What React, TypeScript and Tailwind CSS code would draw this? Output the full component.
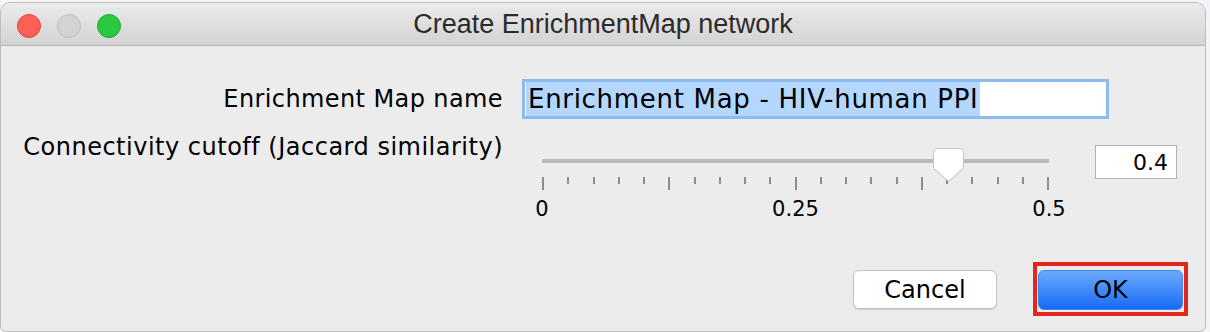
import React from 'react';

const BODY_FONT = { fontFamily: '"DejaVu Sans", "Noto Sans", sans-serif' };
const TITLE_FONT = { fontFamily: '"Liberation Sans", Arial, sans-serif' };

function TrafficLights() {
  return (
    <div className="absolute left-[16px] top-[11px] flex gap-[16px]">
      <span className="block w-[24px] h-[24px] rounded-full bg-[#fe5f57] border border-[#e0443e]" />
      <span className="block w-[24px] h-[24px] rounded-full bg-[#d3d3d3] border border-[#bcbcbc]" />
      <span className="block w-[24px] h-[24px] rounded-full bg-[#2ac840] border border-[#1aab29]" />
    </div>
  );
}

function Thumb() {
  return (
    <svg width="33" height="37" viewBox="0 0 33 37" className="absolute left-[410px] top-[18px]">
      <path
        d="M 5 2.5 H 28 Q 31.5 2.5 31.5 6 V 22 L 16.5 35.5 L 1.5 22 V 6 Q 1.5 2.5 5 2.5 Z"
        fill="#000000"
        opacity="0.08"
      />
      <path
        d="M 5 1.5 H 28 Q 31.5 1.5 31.5 5 V 21 L 16.5 34.5 L 1.5 21 V 5 Q 1.5 1.5 5 1.5 Z"
        fill="#ffffff"
        stroke="#c6c6c6"
        strokeWidth="1"
      />
    </svg>
  );
}

function CutoffSlider() {
  const ticks = Array.from({ length: 21 }, (_, i) => i);
  return (
    <div className="relative w-[548px] pl-[20px] pr-[21px]">
      <div className="pt-[30px]">
        <div className="h-[4px] bg-[#b9b9b9] rounded-[1px]" />
      </div>
      <div className="flex justify-between items-start mt-[14px]">
        {ticks.map((i) => (
          <span
            key={i}
            className={i % 5 === 0 ? 'block w-[2px] h-[13px] bg-[#8c8c8c]' : 'block w-[2px] h-[7px] bg-[#8c8c8c]'}
          />
        ))}
      </div>
      <div className="flex justify-between -mx-[30px] mt-[7px] text-[21px] leading-[24px] text-black">
        <span className="w-[60px] text-center">0</span>
        <span className="w-[60px] text-center">0.25</span>
        <span className="w-[60px] text-center">0.5</span>
      </div>
      <Thumb />
    </div>
  );
}

export default function App() {
  return (
    <div className="w-[1210px] h-[332px] overflow-hidden bg-[#f4f4f8]">
      <div
        className="mt-[2px] w-[1206px] h-[330px] flex flex-col bg-[#ececec] rounded-t-[10px] rounded-b-[6px] border border-[#bdbdbd] overflow-hidden"
        style={BODY_FONT}
      >
        <div className="relative h-[43px] shrink-0 bg-gradient-to-b from-[#ebebeb] to-[#d3d3d3] border-b border-[#b4b4b4] flex items-center justify-center">
          <TrafficLights />
          <span className="text-[27px] text-[#2b2b2b] pt-[1px]" style={TITLE_FONT}>
            Create EnrichmentMap network
          </span>
        </div>

        <div className="flex flex-col pl-[21px] pt-[33px]">
          <div className="flex items-center">
            <label className="w-[481px] text-right text-[24px] tracking-[0.4px] leading-[28px] text-black whitespace-nowrap">
              Enrichment Map name
            </label>
            <div className="ml-[19px] w-[587px] h-[40px] bg-white border-[3px] border-[#8dbbef] flex items-center pl-[1px]">
              <span className="bg-[#b3d7ff] text-[26px] tracking-[0.7px] leading-[34px] text-black px-[2px] whitespace-nowrap">
                Enrichment Map - HIV-human PPI
              </span>
            </div>
          </div>

          <div className="flex items-start mt-[10px]">
            <label className="w-[481px] text-right text-[24px] tracking-[0.5px] leading-[28px] text-black mt-[4px] whitespace-nowrap">
              Connectivity cutoff (Jaccard similarity)
            </label>
            <div className="ml-[19px]">
              <CutoffSlider />
            </div>
            <div className="ml-[25px] mt-[16px] w-[82px] h-[34px] bg-white border border-[#b3b3b3] flex items-center justify-end pr-[8px] text-[22px] text-black">
              0.4
            </div>
          </div>
        </div>

        <div className="flex justify-end items-start mt-auto mb-[15px] pr-[17px]">
          <button className="mt-[8px] w-[144px] h-[39px] bg-white rounded-[6px] border border-[#c4c4c4] shadow-[0_1px_1px_rgba(0,0,0,0.15)] text-[24px] text-black">
            Cancel
          </button>
          <div className="ml-[36px] border-[4px] border-[#e2281c] pt-[4px] pb-[2px] px-[1px]">
            <button className="w-[145px] h-[40px] rounded-[6px] bg-gradient-to-b from-[#6aaafc] to-[#1569f6] border border-[#3f86f0] text-[24px] text-black">
              OK
            </button>
          </div>
        </div>
      </div>
    </div>
  );
}
